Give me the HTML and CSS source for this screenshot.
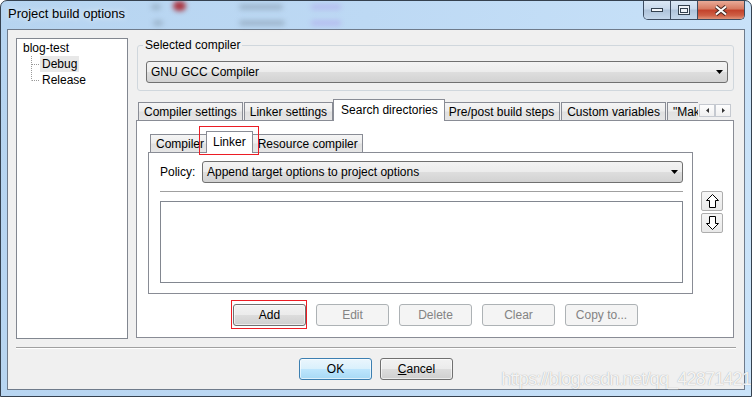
FILE: index.html
```html
<!DOCTYPE html>
<html lang="en">
<head>
  <meta charset="UTF-8">
  <title>Project build options</title>
  <link rel="stylesheet" href="styles.css">
</head>
<body>

  <div class="window">
    <div class="titlebar">
      <!-- what shows through the glass -->
      <div class="glass">
        <span class="smear s1"></span>
        <span class="smear s2 red"></span>
        <span class="smear s3"></span>
        <span class="smear s4 lilac"></span>
        <span class="smear s5"></span>
        <span class="smear s6"></span>
        <span class="smear s7 lilac"></span>
      </div>
      <span class="title">Project build options</span>
      <div class="caption">
        <div class="cap-btn cap-min">
          <svg width="13" height="5" viewBox="0 0 13 5"><rect x="0.5" y="0.5" width="11" height="3" fill="#f4f7fb" stroke="#33414f"/></svg>
        </div>
        <div class="cap-btn cap-max">
          <svg width="12" height="10" viewBox="0 0 12 10"><rect x="0.5" y="0.5" width="11" height="9" fill="#eef3f8" stroke="#33414f"/><rect x="2.5" y="3.5" width="7" height="4" fill="none" stroke="#33414f"/></svg>
        </div>
        <div class="cap-btn cap-close">
          <svg width="14" height="11" viewBox="0 0 14 11"><path d="M2 1.5 L12 9.5 M12 1.5 L2 9.5" stroke="#4a2a24" stroke-width="4"/><path d="M2 1.5 L12 9.5 M12 1.5 L2 9.5" stroke="#fff" stroke-width="2"/></svg>
        </div>
      </div>
    </div>

    <div class="client">
      <div class="main">
        <div class="tree">
          <div class="node">blog-test</div>
          <div class="node child">
            <svg class="conn" width="9" height="16" viewBox="0 0 9 16"><path d="M0.5 0 V16 M1 8.5 H9" stroke="#9a9a9a" stroke-dasharray="1 1"/></svg>
            <span class="label selected">Debug</span>
          </div>
          <div class="node child">
            <svg class="conn" width="9" height="16" viewBox="0 0 9 16"><path d="M0.5 0 V8.5 M1 8.5 H9" stroke="#9a9a9a" stroke-dasharray="1 1"/></svg>
            <span class="label">Release</span>
          </div>
        </div>

        <div class="right">
          <fieldset class="group">
            <legend>Selected compiler</legend>
            <div class="combo">
              <span>GNU GCC Compiler</span>
              <svg width="7" height="4" viewBox="0 0 7 4"><polygon points="0,0 7,0 3.5,4" fill="#000"/></svg>
            </div>
          </fieldset>

          <div class="notebook">
            <div class="strip">
              <div class="tab-list clip">
                <div class="tab">Compiler settings</div>
                <div class="tab">Linker settings</div>
                <div class="tab active">Search directories</div>
                <div class="tab">Pre/post build steps</div>
                <div class="tab">Custom variables</div>
                <div class="tab">"Make" commands</div>
              </div>
              <div class="scroll-arrows">
                <span><svg width="3" height="5" viewBox="0 0 3 5"><polygon points="3,0 3,5 0,2.5" fill="#333"/></svg></span>
                <span><svg width="3" height="5" viewBox="0 0 3 5"><polygon points="0,0 0,5 3,2.5" fill="#333"/></svg></span>
              </div>
            </div>

            <div class="page">
              <div class="page-top">
                <div class="sub-notebook">
                  <div class="strip">
                    <div class="tab-list small">
                      <div class="tab">Compiler</div>
                      <div class="tab active marked">Linker</div>
                      <div class="tab">Resource compiler</div>
                    </div>
                  </div>
                  <div class="sub-page">
                    <div class="policy-row">
                      <span class="policy-label">Policy:</span>
                      <div class="combo">
                        <span>Append target options to project options</span>
                        <svg width="7" height="4" viewBox="0 0 7 4"><polygon points="0,0 7,0 3.5,4" fill="#000"/></svg>
                      </div>
                    </div>
                    <div class="hline"></div>
                    <div class="listbox"></div>
                  </div>
                </div>

                <div class="updown">
                  <button class="arrow-btn">
                    <svg width="13" height="14" viewBox="0 0 13 14"><polygon points="6.5,0.5 12.5,6.5 9.5,6.5 9.5,13.5 3.5,13.5 3.5,6.5 0.5,6.5" fill="#fff" stroke="#000"/></svg>
                  </button>
                  <button class="arrow-btn">
                    <svg width="13" height="14" viewBox="0 0 13 14"><polygon points="6.5,13.5 12.5,7.5 9.5,7.5 9.5,0.5 3.5,0.5 3.5,7.5 0.5,7.5" fill="#fff" stroke="#000"/></svg>
                  </button>
                </div>
              </div>

              <div class="btn-row">
                <button class="btn marked">Add</button>
                <button class="btn" disabled>Edit</button>
                <button class="btn" disabled>Delete</button>
                <button class="btn" disabled>Clear</button>
                <button class="btn" disabled>Copy to...</button>
              </div>
            </div>
          </div>
        </div>
      </div>

      <div class="separator"></div>

      <div class="footer">
        <button class="btn default">OK</button>
        <button class="btn"><u>C</u>ancel</button>
      </div>
    </div>

    <div class="watermark">https://blog.csdn.net/qq_42871421</div>
  </div>

</body>
</html>
```

FILE: styles.css
```css
* {
  box-sizing: border-box;
}

body {
  margin: 0;
  font-family: "Liberation Sans", Arial, sans-serif;
  font-size: 12px;
  color: #000;
  background: #fff;
}

/* window frame */
.window {
  position: relative;
  width: 752px;
  height: 397px;
  border: 1px solid #35414f;
  border-radius: 7px 7px 0 0;
  background: linear-gradient(100deg, #b6d4f0 0%, #bdd9f4 45%, #cae3f9 100%);
  display: flex;
  flex-direction: column;
  overflow: hidden;
}

.titlebar {
  position: relative;
  height: 28px;
  flex-shrink: 0;
  display: flex;
  justify-content: space-between;
  align-items: flex-start;
  padding-left: 7px;
}

.glass {
  position: absolute;
  inset: 0;
  filter: blur(2.5px);
}

.smear {
  position: absolute;
  height: 6px;
  background: rgba(110, 125, 140, 0.35);
  border-radius: 3px;
}

.smear.red {
  background: rgba(170, 35, 45, 0.9);
  height: 10px;
  border-radius: 5px;
}

.smear.lilac {
  background: rgba(175, 165, 235, 0.5);
}

.s1 { left: 150px; top: 3px; width: 10px; }
.s2 { left: 172px; top: 0; width: 13px; }
.s3 { left: 238px; top: 3px; width: 44px; }
.s4 { left: 310px; top: 3px; width: 30px; }
.s5 { left: 152px; top: 19px; width: 10px; }
.s6 { left: 238px; top: 19px; width: 46px; }
.s7 { left: 310px; top: 19px; width: 30px; }

.title {
  position: relative;
  margin-top: 5px;
  font-size: 13px;
  line-height: 16px;
  text-shadow: 0 0 6px rgba(255, 255, 255, 0.9);
}

.caption {
  position: relative;
  display: flex;
  height: 19px;
  margin-right: 6px;
  border: 1px solid #3d4c60;
  border-top: none;
  border-radius: 0 0 5px 5px;
  overflow: hidden;
}

.cap-btn {
  display: flex;
  align-items: center;
  justify-content: center;
}

.cap-min, .cap-max {
  width: 27px;
  border-right: 1px solid #3d4c60;
  background: linear-gradient(#dbe8f5, #c8d9eb 45%, #aec3da 50%, #c4d7eb);
}

.cap-close {
  width: 46px;
  background: linear-gradient(#e9ab98, #d6785f 45%, #c2412a 50%, #cf5f45 80%, #e0947a);
}

/* client area */
.client {
  height: 361px;
  flex-shrink: 0;
  margin: 0 6px;
  border: 1px solid #6f7b8b;
  background: #f0f0f0;
  display: flex;
  flex-direction: column;
}

.main {
  display: flex;
  gap: 8px;
  height: 309px;
  padding: 8px 10px 0 8px;
  flex-shrink: 0;
}

.tree {
  width: 112px;
  height: 301px;
  flex-shrink: 0;
  background: #fff;
  border: 1px solid #828790;
  padding: 1px 0 0 6px;
  line-height: 16px;
}

.node {
  display: flex;
  height: 16px;
  white-space: nowrap;
}

.node.child {
  padding-left: 8px;
}

.label {
  padding: 0 2px;
}

.label.selected {
  background: #e8e8e8;
}

.right {
  width: 598px;
  display: flex;
  flex-direction: column;
}

.group {
  margin: 0 0 0 1px;
  padding: 9px 5px 7px 8px;
  border: 1px solid #d0d7dd;
  border-radius: 3px;
}

.group legend {
  padding: 0 2px;
  margin-left: -3px;
  line-height: 14px;
}

.combo {
  height: 22px;
  display: flex;
  align-items: center;
  justify-content: space-between;
  padding: 0 4px 0 4px;
  border: 1px solid #707070;
  border-radius: 3px;
  background: linear-gradient(#f3f3f3, #ececec 50%, #dedede 50%, #d2d2d2);
  white-space: nowrap;
}

/* notebooks */
.notebook {
  margin-top: 8px;
}

.strip {
  display: flex;
  height: 22px;
  background: linear-gradient(to top, #898c95 1px, transparent 1px);
}

.tab-list {
  flex: 1;
  min-width: 0;
  display: flex;
  align-items: flex-end;
  padding-left: 2px;
}

.tab-list.clip {
  overflow: hidden;
}

.tab {
  flex-shrink: 0;
  height: 18px;
  margin: 0 1px 1px 0;
  padding: 2px 5px 0 5px;
  line-height: 14px;
  white-space: nowrap;
  border: 1px solid #898c95;
  border-bottom: none;
  background: linear-gradient(#f5f5f5, #ededed 45%, #e0e0e0 55%, #e6e6e6);
}

.tab.active {
  position: relative;
  z-index: 1;
  height: 22px;
  margin: 0 -2px 0 -1px;
  padding: 3px 6px 0 7px;
  background: #fff;
}

.tab-list.small .tab {
  margin-right: 0;
  padding: 2px 4px 0 5px;
}

.tab-list.small .tab.active {
  margin: 0 -1px 0 -3px;
  padding: 3px 6px 0 6px;
}

.scroll-arrows {
  display: flex;
  align-self: flex-start;
  margin: 5px 3px 0 1px;
}

.scroll-arrows span {
  width: 16px;
  height: 13px;
  display: flex;
  align-items: center;
  justify-content: center;
  border: 1px solid #c5c9d0;
  background: linear-gradient(#fdfdfd, #f0f0f0);
}

.page {
  height: 217px;
  border: 1px solid #898c95;
  border-top: none;
  background: #fff;
  padding: 10px 10px 11px 11px;
  display: flex;
  flex-direction: column;
}

.page-top {
  display: flex;
  gap: 8px;
}

.sub-notebook {
  width: 545px;
}

.sub-page {
  height: 141px;
  border: 1px solid #898c95;
  border-top: none;
  padding: 8px 9px 10px 11px;
}

.policy-row {
  display: flex;
  align-items: center;
}

.policy-label {
  width: 42px;
  flex-shrink: 0;
}

.policy-row .combo {
  flex: 1;
}

.hline {
  margin: 8px 0 9px;
  border-top: 1px solid #a0a0a0;
}

.listbox {
  height: 82px;
  border: 1px solid #828790;
}

.updown {
  margin-top: 60px;
  display: flex;
  flex-direction: column;
  gap: 2px;
}

.arrow-btn {
  width: 22px;
  height: 20px;
  padding: 0;
  display: flex;
  align-items: center;
  justify-content: center;
  border: 1px solid #adadad;
  border-radius: 2px;
  background: linear-gradient(#f6f6f6, #e9e9e9);
}

/* buttons */
.btn-row {
  margin-top: 10px;
  display: flex;
  justify-content: center;
  gap: 10px;
}

.btn {
  width: 73px;
  height: 22px;
  padding: 0;
  font: inherit;
  color: #000;
  border: 1px solid #707070;
  border-radius: 3px;
  background: linear-gradient(#f2f2f2, #ebebeb 50%, #dddddd 50%, #cfcfcf);
  box-shadow: inset 0 0 0 1px rgba(255, 255, 255, 0.6);
}

.btn:disabled {
  color: #838383;
  border-color: #adb2b5;
  background: #f4f4f4;
  box-shadow: none;
}

.btn.default {
  border-color: #3c7fb1;
  background: linear-gradient(#eaf6fd, #d9f0fc 50%, #bee6fd 50%, #a7d9f5);
}

/* red annotation boxes */
.marked {
  position: relative;
}

.marked::after {
  content: "";
  position: absolute;
  border: 1px solid #ec1c24;
  pointer-events: none;
}

.tab.marked::after {
  left: -8px;
  right: -7px;
  top: -6px;
  bottom: -2px;
}

.btn.marked::after {
  left: -3px;
  right: -2px;
  top: -5px;
  bottom: -4px;
}

.separator {
  height: 2px;
  margin: 8px 8px 0;
  border-top: 1px solid #a0a0a0;
  border-bottom: 1px solid #fff;
}

.footer {
  margin-top: 9px;
  display: flex;
  justify-content: center;
  gap: 8px;
}

.watermark {
  position: absolute;
  right: 0;
  bottom: 7px;
  font-size: 18px;
  line-height: 20px;
  letter-spacing: -0.8px;
  color: rgba(255, 255, 255, 0.9);
  text-shadow: 0 0 1px rgba(80, 80, 80, 0.55);
  white-space: nowrap;
}
```
